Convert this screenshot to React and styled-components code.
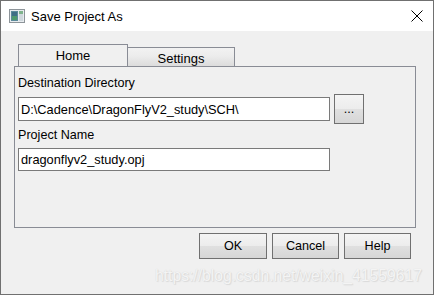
import React from "react";
import styled, { createGlobalStyle } from "styled-components";

const Global = createGlobalStyle`
  html, body { margin: 0; padding: 0; background: #f0f0f0; }
  * { box-sizing: border-box; }
`;

const Window = styled.div`
  position: relative;
  width: 434px;
  height: 295px;
  border: 1px solid #707070;
  background: #f0f0f0;
  font-family: "Liberation Sans", Arial, sans-serif;
  font-size: 12px;
  color: #000;
  display: flex;
  flex-direction: column;
  overflow: hidden;
`;

const TitleBar = styled.div`
  height: 30px;
  background: #fff;
  display: flex;
  align-items: center;
  padding-left: 8px;
  padding-right: 10px;
`;

const Title = styled.span`
  margin-left: 6px;
  font-size: 13px;
  flex: 1;
`;

const Body = styled.div`
  flex: 1;
  display: flex;
  flex-direction: column;
  padding: 13px 0 0 13px;
`;

const TabStrip = styled.div`
  display: flex;
  align-items: flex-end;
  padding-left: 4px;
  height: 22px;
`;

const Tab = styled.div`
  width: ${(p) => p.$w}px;
  height: ${(p) => (p.$active ? 22 : 19)}px;
  margin-left: ${(p) => (p.$first ? 0 : -1)}px;
  border: 1px solid #898c95;
  border-bottom: none;
  background: ${(p) =>
    p.$active ? "#f0f0f0" : "linear-gradient(#f2f2f2, #ececec 45%, #dcdcdc)"};
  display: flex;
  align-items: center;
  justify-content: center;
  font-size: 13px;
  padding-top: ${(p) => (p.$active ? 0 : 2)}px;
`;

const Panel = styled.div`
  width: 402px;
  height: 162px;
  border: 1px solid #898c95;
  padding: 9px 0 0 3px;
  display: flex;
  flex-direction: column;
`;

const Label = styled.div`
  font-size: 12.6px;
  height: 15px;
  line-height: 15px;
  margin-top: ${(p) => p.$mt || 0}px;
  margin-bottom: ${(p) => p.$mb || 0}px;
`;

const Row = styled.div`
  display: flex;
  align-items: center;
  gap: 4px;
  margin-top: -3px;
`;

const Field = styled.div`
  width: 312px;
  height: ${(p) => p.$h}px;
  border: 1px solid #7a7a7a;
  background: #fff;
  display: flex;
  align-items: center;
  padding-left: 2px;
  font-size: 12.8px;
  white-space: nowrap;
  overflow: hidden;
`;

const Button = styled.div`
  width: ${(p) => p.$w}px;
  height: ${(p) => p.$h}px;
  border: 1px solid #707070;
  background: linear-gradient(#f4f4f4, #ececec 50%, #e0e0e0 51%, #d6d6d6);
  display: flex;
  align-items: center;
  justify-content: center;
  font-size: 12.6px;
`;

const Footer = styled.div`
  display: flex;
  justify-content: flex-end;
  gap: 5px;
  padding-right: 22px;
  margin-top: 5px;
`;

const Watermark = styled.div`
  position: absolute;
  left: 154px;
  top: 266px;
  font-size: 15.7px;
  color: #f4f4f4;
  text-shadow: 0 0 1px #d0d0d0, 1px 1px 1px #dadada;
  white-space: nowrap;
  pointer-events: none;
`;

const AppIcon = () => (
  <svg width="16" height="14" viewBox="0 0 16 14">
    <rect x="0.5" y="0.5" width="15" height="13" fill="#e8ecef" stroke="#8d9499" />
    <rect x="2" y="2" width="7" height="10" fill="#5b8a9a" />
    <rect x="3" y="3" width="5" height="4" fill="#3f6f86" />
    <rect x="3" y="7" width="5" height="4" fill="#4f9a6e" />
    <rect x="10" y="2" width="4" height="10" fill="#cfd8dd" />
    <rect x="10" y="2" width="4" height="3" fill="#7fb38c" />
  </svg>
);

const CloseIcon = () => (
  <svg width="12" height="12" viewBox="0 0 12 12">
    <path d="M0.5 0.5 L11.5 11.5 M11.5 0.5 L0.5 11.5" stroke="#000" strokeWidth="1" />
  </svg>
);

export default function App() {
  return (
    <>
      <Global />
      <Window>
        <TitleBar>
          <AppIcon />
          <Title>Save Project As</Title>
          <CloseIcon />
        </TitleBar>
        <Body>
          <TabStrip>
            <Tab $active $first $w={110}>Home</Tab>
            <Tab $w={108}>Settings</Tab>
          </TabStrip>
          <Panel>
            <Label $mb={6}>Destination Directory</Label>
            <Row>
              <Field $h={24}>D:\Cadence\DragonFlyV2_study\SCH\</Field>
              <Button $w={30} $h={30}>...</Button>
            </Row>
            <Label $mt={4} $mb={5}>Project Name</Label>
            <Field $h={23}>dragonflyv2_study.opj</Field>
          </Panel>
          <Footer>
            <Button $w={68} $h={26}>OK</Button>
            <Button $w={67} $h={26}>Cancel</Button>
            <Button $w={67} $h={26}>Help</Button>
          </Footer>
        </Body>
        <Watermark>https://blog.csdn.net/weixin_41559617</Watermark>
      </Window>
    </>
  );
}
